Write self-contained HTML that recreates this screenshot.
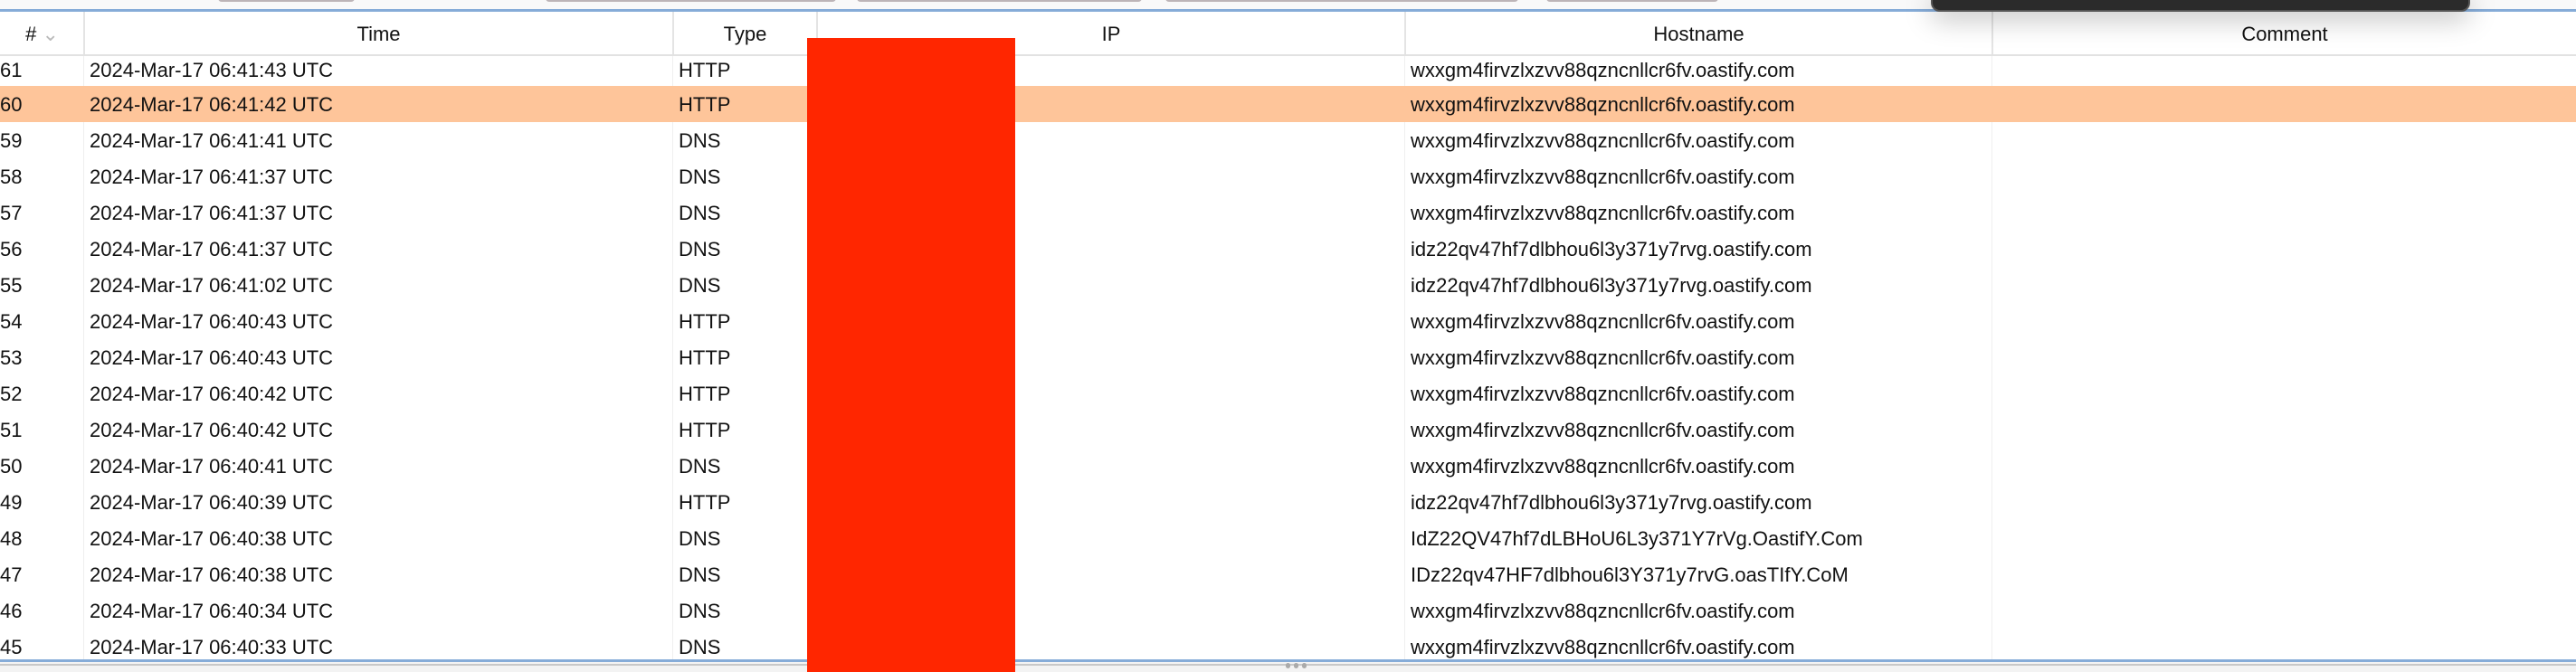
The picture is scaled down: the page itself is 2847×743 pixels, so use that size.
<!DOCTYPE html>
<html><head><meta charset="utf-8"><style>
*{margin:0;padding:0;box-sizing:border-box}
body{width:2847px;height:743px;overflow:hidden;background:#fff;font-family:"Liberation Sans",Arial,sans-serif;color:#111;position:relative}
.top{position:absolute;left:0;top:0;width:2847px;height:11px;background:#f9f9f9}
.btn{position:absolute;top:-20px;height:22px;border:2px solid #bdb5b8;border-radius:4px;background:#f9f9f9}
.blue{position:absolute;left:0;top:10px;width:2847px;height:3px;background:#86acd8}
.hdr{position:absolute;left:0;top:13px;width:2847px;height:49px;background:#fff;border-bottom:2px solid #e2e2e2;font-size:22px}
.hdr div{position:absolute;top:0;height:47px;line-height:49px;text-align:center;border-left:2px solid #e4e4e4}
.row{position:absolute;left:0;width:2847px;height:40px;font-size:22px;line-height:42px}
.row span{position:absolute;top:0;white-space:nowrap}
.sel{background:#fec59a}
.vl{position:absolute;top:62px;height:667px;width:1px;background:#efefef}
.red{position:absolute;left:892px;top:42px;width:230px;height:701px;background:#ff2600}
.bot{position:absolute;left:0;top:729px;width:2847px;height:14px;background:#f3f3f3;border-top:3px solid #86acd8}
.bot2{position:absolute;left:0;top:734px;width:2847px;height:2px;background:#c8c8c8}
.pop{position:absolute;left:2134px;top:-10px;width:596px;height:23px;background:#2b2b2b;border:2px solid #555;border-radius:10px;box-shadow:0 8px 30px rgba(0,0,0,.25)}
.dot{position:absolute;top:733px;width:5px;height:6px;border-radius:3px;background:#aaa}
</style></head><body>
<div class="top"></div>
<div class="btn" style="left:241px;width:151px"></div>
<div class="btn" style="left:603px;width:321px"></div>
<div class="btn" style="left:947px;width:315px"></div>
<div class="btn" style="left:1288px;width:390px"></div>
<div class="btn" style="left:1709px;width:190px"></div>
<div class="blue"></div>
<div class="hdr">
<div style="left:0;width:93px;border-left:none">#&nbsp;<span style="color:#bbb">&#8964;</span></div>
<div style="left:92px;width:651px">Time</div>
<div style="left:743px;width:159px">Type</div>
<div style="left:902px;width:650px">IP</div>
<div style="left:1552px;width:649px">Hostname</div>
<div style="left:2201px;width:646px">Comment</div>
</div>
<div class="vl" style="left:92px"></div><div class="vl" style="left:743px"></div><div class="vl" style="left:902px"></div><div class="vl" style="left:1552px"></div><div class="vl" style="left:2201px"></div>
<div class="row" style="top:57px"><span style="left:0">61</span><span style="left:99px">2024-Mar-17 06:41:43 UTC</span><span style="left:750px">HTTP</span><span style="left:1559px">wxxgm4firvzlxzvv88qzncnllcr6fv.oastify.com</span></div>
<div class="row sel" style="top:95px"><span style="left:0">60</span><span style="left:99px">2024-Mar-17 06:41:42 UTC</span><span style="left:750px">HTTP</span><span style="left:1559px">wxxgm4firvzlxzvv88qzncnllcr6fv.oastify.com</span></div>
<div class="row" style="top:135px"><span style="left:0">59</span><span style="left:99px">2024-Mar-17 06:41:41 UTC</span><span style="left:750px">DNS</span><span style="left:1559px">wxxgm4firvzlxzvv88qzncnllcr6fv.oastify.com</span></div>
<div class="row" style="top:175px"><span style="left:0">58</span><span style="left:99px">2024-Mar-17 06:41:37 UTC</span><span style="left:750px">DNS</span><span style="left:1559px">wxxgm4firvzlxzvv88qzncnllcr6fv.oastify.com</span></div>
<div class="row" style="top:215px"><span style="left:0">57</span><span style="left:99px">2024-Mar-17 06:41:37 UTC</span><span style="left:750px">DNS</span><span style="left:1559px">wxxgm4firvzlxzvv88qzncnllcr6fv.oastify.com</span></div>
<div class="row" style="top:255px"><span style="left:0">56</span><span style="left:99px">2024-Mar-17 06:41:37 UTC</span><span style="left:750px">DNS</span><span style="left:1559px">idz22qv47hf7dlbhou6l3y371y7rvg.oastify.com</span></div>
<div class="row" style="top:295px"><span style="left:0">55</span><span style="left:99px">2024-Mar-17 06:41:02 UTC</span><span style="left:750px">DNS</span><span style="left:1559px">idz22qv47hf7dlbhou6l3y371y7rvg.oastify.com</span></div>
<div class="row" style="top:335px"><span style="left:0">54</span><span style="left:99px">2024-Mar-17 06:40:43 UTC</span><span style="left:750px">HTTP</span><span style="left:1559px">wxxgm4firvzlxzvv88qzncnllcr6fv.oastify.com</span></div>
<div class="row" style="top:375px"><span style="left:0">53</span><span style="left:99px">2024-Mar-17 06:40:43 UTC</span><span style="left:750px">HTTP</span><span style="left:1559px">wxxgm4firvzlxzvv88qzncnllcr6fv.oastify.com</span></div>
<div class="row" style="top:415px"><span style="left:0">52</span><span style="left:99px">2024-Mar-17 06:40:42 UTC</span><span style="left:750px">HTTP</span><span style="left:1559px">wxxgm4firvzlxzvv88qzncnllcr6fv.oastify.com</span></div>
<div class="row" style="top:455px"><span style="left:0">51</span><span style="left:99px">2024-Mar-17 06:40:42 UTC</span><span style="left:750px">HTTP</span><span style="left:1559px">wxxgm4firvzlxzvv88qzncnllcr6fv.oastify.com</span></div>
<div class="row" style="top:495px"><span style="left:0">50</span><span style="left:99px">2024-Mar-17 06:40:41 UTC</span><span style="left:750px">DNS</span><span style="left:1559px">wxxgm4firvzlxzvv88qzncnllcr6fv.oastify.com</span></div>
<div class="row" style="top:535px"><span style="left:0">49</span><span style="left:99px">2024-Mar-17 06:40:39 UTC</span><span style="left:750px">HTTP</span><span style="left:1559px">idz22qv47hf7dlbhou6l3y371y7rvg.oastify.com</span></div>
<div class="row" style="top:575px"><span style="left:0">48</span><span style="left:99px">2024-Mar-17 06:40:38 UTC</span><span style="left:750px">DNS</span><span style="left:1559px">IdZ22QV47hf7dLBHoU6L3y371Y7rVg.OastifY.Com</span></div>
<div class="row" style="top:615px"><span style="left:0">47</span><span style="left:99px">2024-Mar-17 06:40:38 UTC</span><span style="left:750px">DNS</span><span style="left:1559px">IDz22qv47HF7dlbhou6l3Y371y7rvG.oasTIfY.CoM</span></div>
<div class="row" style="top:655px"><span style="left:0">46</span><span style="left:99px">2024-Mar-17 06:40:34 UTC</span><span style="left:750px">DNS</span><span style="left:1559px">wxxgm4firvzlxzvv88qzncnllcr6fv.oastify.com</span></div>
<div class="row" style="top:695px"><span style="left:0">45</span><span style="left:99px">2024-Mar-17 06:40:33 UTC</span><span style="left:750px">DNS</span><span style="left:1559px">wxxgm4firvzlxzvv88qzncnllcr6fv.oastify.com</span></div>
<div class="bot"></div><div class="bot2"></div>
<div class="dot" style="left:1421px"></div><div class="dot" style="left:1430px"></div><div class="dot" style="left:1439px"></div>
<div class="red"></div>
<div class="pop"></div>
</body></html>
